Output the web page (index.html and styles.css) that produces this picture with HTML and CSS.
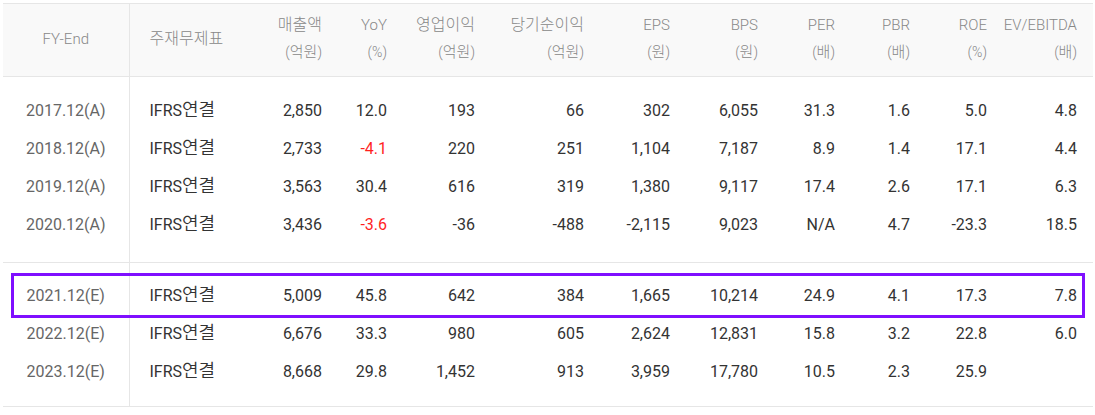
FILE: index.html
```html
<!DOCTYPE html>
<html lang="ko">
<head>
<meta charset="utf-8">
<link rel="stylesheet" href="styles.css">
</head>
<body>
<div class="wrap">
<table class="fin">
  <colgroup>
    <col class="c1"><col class="c2"><col class="c3"><col class="c4"><col class="c5"><col class="c6">
    <col class="c7"><col class="c8"><col class="c9"><col class="c10"><col class="c11"><col class="c12">
  </colgroup>
  <thead>
    <tr>
      <th class="year">FY-End</th>
      <th class="std"><span class="ko">주재무제표</span></th>
      <th><span class="ko">매출액</span><span class="unit">(<span class="ko">억원</span>)</span></th>
      <th>YoY<span class="unit">(%)</span></th>
      <th><span class="ko">영업이익</span><span class="unit">(<span class="ko">억원</span>)</span></th>
      <th><span class="ko">당기순이익</span><span class="unit">(<span class="ko">억원</span>)</span></th>
      <th>EPS<span class="unit">(<span class="ko">원</span>)</span></th>
      <th>BPS<span class="unit">(<span class="ko">원</span>)</span></th>
      <th>PER<span class="unit">(<span class="ko">배</span>)</span></th>
      <th>PBR<span class="unit">(<span class="ko">배</span>)</span></th>
      <th>ROE<span class="unit">(%)</span></th>
      <th class="last">EV/EBITDA<span class="unit">(<span class="ko">배</span>)</span></th>
    </tr>
  </thead>
  <tbody class="g1">
    <tr class="first">
      <td class="year">2017.12(A)</td><td class="std">IFRS<span class="ko">연결</span></td><td>2,850</td><td>12.0</td><td>193</td><td>66</td><td>302</td><td>6,055</td><td>31.3</td><td>1.6</td><td>5.0</td><td class="last">4.8</td>
    </tr>
    <tr>
      <td class="year">2018.12(A)</td><td class="std">IFRS<span class="ko">연결</span></td><td>2,733</td><td class="neg">-4.1</td><td>220</td><td>251</td><td>1,104</td><td>7,187</td><td>8.9</td><td>1.4</td><td>17.1</td><td class="last">4.4</td>
    </tr>
    <tr>
      <td class="year">2019.12(A)</td><td class="std">IFRS<span class="ko">연결</span></td><td>3,563</td><td>30.4</td><td>616</td><td>319</td><td>1,380</td><td>9,117</td><td>17.4</td><td>2.6</td><td>17.1</td><td class="last">6.3</td>
    </tr>
    <tr class="end">
      <td class="year">2020.12(A)</td><td class="std">IFRS<span class="ko">연결</span></td><td>3,436</td><td class="neg">-3.6</td><td>-36</td><td>-488</td><td>-2,115</td><td>9,023</td><td>N/A</td><td>4.7</td><td>-23.3</td><td class="last">18.5</td>
    </tr>
  </tbody>
  <tbody class="g2">
    <tr class="first">
      <td class="year">2021.12(E)</td><td class="std">IFRS<span class="ko">연결</span></td><td>5,009</td><td>45.8</td><td>642</td><td>384</td><td>1,665</td><td>10,214</td><td>24.9</td><td>4.1</td><td>17.3</td><td class="last">7.8</td>
    </tr>
    <tr>
      <td class="year">2022.12(E)</td><td class="std">IFRS<span class="ko">연결</span></td><td>6,676</td><td>33.3</td><td>980</td><td>605</td><td>2,624</td><td>12,831</td><td>15.8</td><td>3.2</td><td>22.8</td><td class="last">6.0</td>
    </tr>
    <tr class="end">
      <td class="year">2023.12(E)</td><td class="std">IFRS<span class="ko">연결</span></td><td>8,668</td><td>29.8</td><td>1,452</td><td>913</td><td>3,959</td><td>17,780</td><td>10.5</td><td>2.3</td><td>25.9</td><td class="last"></td>
    </tr>
  </tbody>
</table>
<div class="highlight"></div>
</div>
</body>
</html>
```

FILE: styles.css
```css
html, body {
  margin: 0;
  padding: 0;
  background: #fff;
}
.wrap {
  position: relative;
  padding: 3px 0 0 3px;
}
.fin {
  border-collapse: collapse;
  table-layout: fixed;
  width: 1090px;
  font-family: Roboto, "Noto Sans CJK KR", sans-serif;
  font-size: 16px;
  color: #333;
}
.c1 { width: 126px; }
.c2 { width: 121px; }
.c3 { width: 82px; }
.c4 { width: 65px; }
.c5 { width: 88px; }
.c6 { width: 109px; }
.c7 { width: 86px; }
.c8 { width: 88px; }
.c9 { width: 77px; }
.c10 { width: 75px; }
.c11 { width: 77px; }
.c12 { width: 96px; }

.fin .ko {
  font-family: "Noto Sans CJK KR", sans-serif;
  line-height: 1;
}
.fin thead th {
  background: #f9f9f9;
  border-top: 1px solid #e6e6e6;
  border-bottom: 1px solid #e6e6e6;
  height: 70px;
  padding: 0 10px 2px 0;
  font-weight: 300;
  font-size: 15px;
  line-height: 27px;
  color: #888;
  text-align: right;
  vertical-align: middle;
  white-space: nowrap;
}
.fin thead .ko {
  font-size: 16px;
}
.fin .unit {
  display: block;
  font-size: 14px;
}
.fin .unit .ko {
  font-size: 15px;
}
.fin td {
  padding: 0 10px 0 0;
  height: 38px;
  line-height: 38px;
  text-align: right;
  white-space: nowrap;
}
.fin td .ko {
  font-size: 18px;
  font-weight: 350;
}
.fin th.year, .fin td.year {
  text-align: center;
  padding: 0;
  border-right: 1px solid #e6e6e6;
}
.fin th.year {
  padding-bottom: 2px;
}
.fin td.year {
  color: #666;
}
.fin th.std, .fin td.std {
  text-align: left;
  padding-left: 20px;
}
.fin th.last, .fin td.last {
  padding-right: 16px;
}
.fin td.neg {
  color: #ff1f1f;
}
.g1 tr.first td { padding-top: 15px; }
.g1 tr.end td { padding-bottom: 18px; }
.g2 tr.first td { padding-top: 14px; }
.g2 tr.end td { padding-bottom: 15px; }
.fin tbody {
  border-bottom: 1px solid #e6e6e6;
}
.highlight {
  position: absolute;
  left: 11px;
  top: 273px;
  width: 1068px;
  height: 39px;
  border: 3px solid #7f0fff;
}
```
